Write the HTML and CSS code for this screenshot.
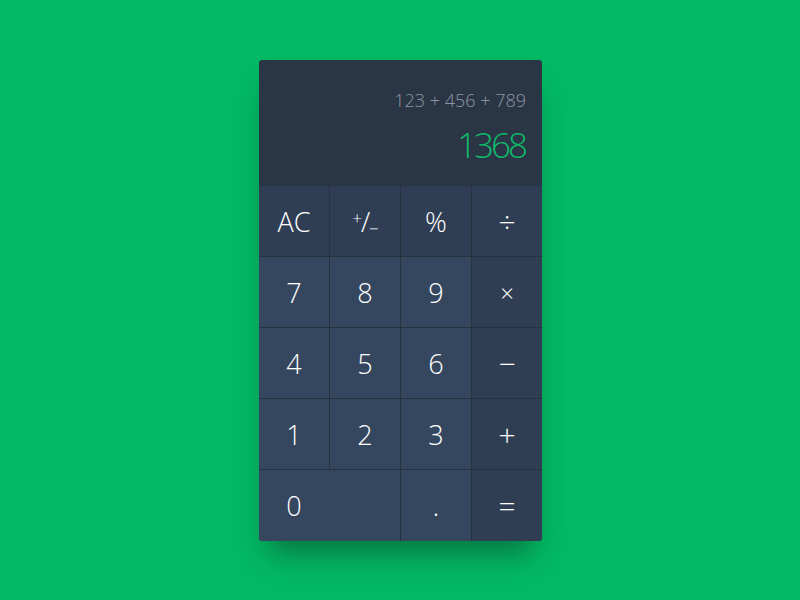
FILE: index.html
```html
<!DOCTYPE html>
<html lang="en">
<head>
<meta charset="utf-8">
<title>Calculator</title>
<link rel="stylesheet" href="styles.css">
</head>
<body>
<main class="stage">
  <section class="calc">
    <div class="display">
      <div class="expr">123 + 456 + 789</div>
      <div class="result">1368</div>
    </div>
    <div class="keys">
      <button class="key fn">AC</button>
      <button class="key fn"><span class="sign"><sup>+</sup>/<sub>&minus;</sub></span></button>
      <button class="key fn">%</button>
      <button class="key fn sym">&divide;</button>

      <button class="key num">7</button>
      <button class="key num">8</button>
      <button class="key num">9</button>
      <button class="key op sym times">&times;</button>

      <button class="key num">4</button>
      <button class="key num">5</button>
      <button class="key num">6</button>
      <button class="key op sym">&minus;</button>

      <button class="key num">1</button>
      <button class="key num">2</button>
      <button class="key num">3</button>
      <button class="key op sym">+</button>

      <button class="key num zero"><span class="zero-label">0</span></button>
      <button class="key num">.</button>
      <button class="key op sym">=</button>
    </div>
  </section>
</main>
</body>
</html>
```
FILE: styles.css
```css
* { box-sizing: border-box; }

html, body {
  margin: 0;
  height: 100%;
}

body {
  background: #03b963;
  font-family: "Open Sans", "Liberation Sans", sans-serif;
  font-weight: 300;
}

.stage {
  display: flex;
  justify-content: center;
  padding-top: 60px;
  padding-left: 1px;
}

.calc {
  width: 283px;
  border-radius: 4px;
  overflow: hidden;
  background: #28323f;
  box-shadow: 0 22px 28px -10px rgba(10, 60, 40, 0.55);
}

/* read-out: running expression above the current value */
.display {
  height: 126px;
  background: #2a3546;
  display: flex;
  flex-direction: column;
  align-items: flex-end;
  padding: 31px 16px 0 0;
}

.expr {
  color: #8d96a3;
  font-size: 18px;
  line-height: 1;
}

.result {
  margin-top: 18px;
  margin-right: 1px;
  color: #0fbb68;
  font-size: 35px;
  line-height: 1;
  letter-spacing: -3px;
}

/* keypad */
.keys {
  display: grid;
  grid-template-columns: repeat(4, 70px);
  grid-template-rows: 70px 70px 70px 70px 71px;
  gap: 1px;
  background: #28323f;
}

.key {
  border: 0;
  margin: 0;
  padding: 0;
  font-family: inherit;
  font-weight: 300;
  color: #ffffff;
  font-size: 27px;
  display: flex;
  align-items: center;
  justify-content: center;
}

.fn { background: #2f3e54; }
.num { background: #35475e; }
.op { background: #303e54; }

.sym { font-size: 30px; }
.times { font-size: 24px; }

.sign {
  font-size: 27px;
  letter-spacing: -1px;
}
.sign sup { font-size: 17px; vertical-align: 8px; }
.sign sub { font-size: 17px; vertical-align: -3px; }

.zero {
  grid-column: span 2;
  justify-content: flex-start;
}
.zero-label {
  width: 70px;
  text-align: center;
}
```
